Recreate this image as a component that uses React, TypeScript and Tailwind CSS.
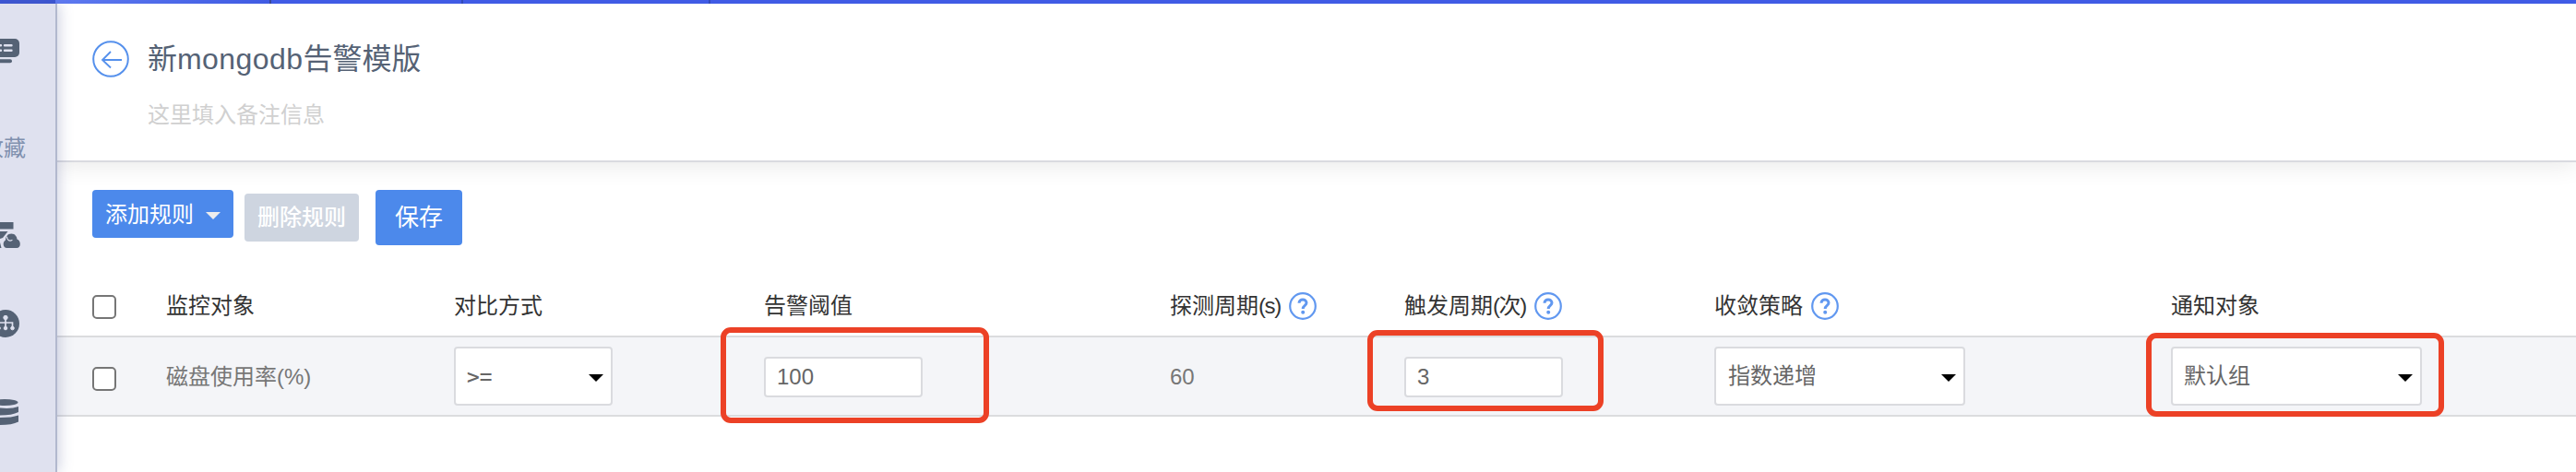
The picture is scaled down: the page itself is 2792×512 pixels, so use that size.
import React from "react";

const arrow = (cls: string) => (
  <svg className={cls} width="16" height="8" viewBox="0 0 16 8" fill="currentColor">
    <path d="M0 0H16L8 8Z" />
  </svg>
);

function Help() {
  return (
    <svg className="mt-[3px] ml-[9px] shrink-0 text-[#6198f0]" width="30" height="30" viewBox="0 0 30 30" fill="none" stroke="currentColor">
      <circle cx="15" cy="15" r="13.8" strokeWidth="2.2" />
      <path d="M11 11.8C11 6.8 19 6.8 19 11.6C19 14.4 15.2 14.4 15.2 18" strokeWidth="3" />
      <circle cx="15.2" cy="21.8" r="2" fill="currentColor" stroke="none" />
    </svg>
  );
}

function Checkbox({ cls }: { cls: string }) {
  return <span className={`block h-[26px] w-[26px] rounded-[5px] border-2 border-[#767676] bg-white ${cls}`} />;
}

function Select({ label, cls }: { label: string; cls: string }) {
  return (
    <div className={`flex h-16 items-center justify-between rounded-[4px] border-2 border-[#dadbdf] bg-white pr-2 ${cls}`}>
      <span>{label}</span>
      {arrow("mt-1 text-black")}
    </div>
  );
}

function Input({ value }: { value: string }) {
  return (
    <div className="mt-0.5 flex h-11 w-[172px] items-center rounded-[4px] border-2 border-[#dadbdf] bg-white pl-3">{value}</div>
  );
}

function Mark({ cls }: { cls: string }) {
  return <div className={`pointer-events-none absolute rounded-[11px] border-6 border-[#ec4126] ${cls}`} />;
}

const columns = "grid grid-cols-[80px_312px_336px_440px_254px_336px_495px_1fr] pl-[38px]";

export default function App() {
  return (
    <div className="relative h-[512px] w-[2792px] overflow-hidden bg-white font-['Liberation_Sans','Noto_Sans_CJK_SC',sans-serif] text-[24px] leading-9">
      <div className="flex h-1">
        <div className="w-[60px] bg-[#3c56d6]" />
        <div className="w-[232px] bg-linear-to-r from-[#617df6] to-[#425eea]" />
        <div className="w-[208px] border-l-2 border-[#3a4a9e] bg-[#425eec]" />
        <div className="w-[268px] border-l-2 border-[#344dc0] bg-[#425eec]" />
        <div className="flex-1 border-l-2 border-[#344dc0] bg-[#425eec]" />
      </div>
      <div className="flex h-[508px]">
        <aside className="relative z-10 flex w-[62px] shrink-0 flex-col border-r-2 border-[#b2b8ce] bg-[#dfe1ef] text-[#556275] shadow-[2px_0_14px_rgba(80,90,150,0.28)]">
          <svg className="mt-[38px] shrink-0" width="24" height="28" viewBox="0 0 24 28" fill="none">
            <rect x="-12" y="0" width="33" height="20" rx="5" fill="currentColor" />
            <path d="M-4 7.2H1M5 7.2H12.5M-4 12.8H1M5 12.8H12.5" stroke="#dfe1ef" strokeWidth="2.4" strokeLinecap="round" />
            <path d="M-8 24.2H11" stroke="currentColor" strokeWidth="4" strokeLinecap="round" />
          </svg>
          <div className="mt-[73px] -ml-[20px] h-12 w-[50px] whitespace-nowrap text-[#8090ae]">收藏</div>
          <svg className="mt-[47px] shrink-0" width="24" height="32" viewBox="0 0 24 32" fill="currentColor">
            <path d="M0 3H14.5V10.5H0ZM0 13H8.5L3 20L0 21Z" />
            <path d="M0 25L1.5 31H0Z" />
            <path d="M7 31C2.5 30 3 24 6 22.5C6 13.500 18 13.500 18.500 21.500C23 23 23 31 18 31Z" />
            <path d="M7.5 19C7.500 22 10 24 13 22.500" fill="none" stroke="#dfe1ef" strokeWidth="1.2" strokeLinecap="round" />
          </svg>
          <svg className="mt-[66px] shrink-0" width="24" height="30" viewBox="0 0 24 30">
            <circle cx="6" cy="15" r="15" fill="currentColor" />
            <g fill="#dfe1ef" stroke="#dfe1ef">
              <path d="M6 8V20M-3 20V14H13.5V20" fill="none" strokeWidth="1.7" />
              <circle cx="6" cy="8.5" r="2.2" />
              <circle cx="6" cy="20" r="1.8" />
              <circle cx="13.5" cy="20" r="1.8" />
              <circle cx="-1.5" cy="20" r="1.8" />
            </g>
          </svg>
          <svg className="mt-[67px] shrink-0" width="24" height="28" viewBox="0 0 24 28" fill="currentColor">
            <ellipse cx="5" cy="3.5" rx="14.500" ry="3.5" />
            <path d="M-9 8Q9 12 20 8V14Q13 17.500 0 17.500H-9ZM-9 20H0Q13 20 20 17.500V24.500Q13 28 0 28H-9Z" />
          </svg>
        </aside>
        <main className="min-w-0 flex-1">
          <header className="relative flex h-[172px] border-b-2 border-[#d9dae0] bg-white pt-10 pl-[38px] shadow-[0_4px_24px_rgba(0,0,0,0.09)]">
            <svg className="text-[#5590ec]" width="40" height="40" viewBox="0 0 40 40" fill="none" stroke="currentColor" strokeWidth="2">
              <circle cx="20" cy="20" r="18.8" />
              <path d="M32 21H11M20 12L11 21L20 29.5" strokeWidth="1.8" />
            </svg>
            <div className="pl-5">
              <h1 className="h-10 text-[32px] leading-10 text-[#556275]">新<span className="tracking-[0.45px]">mongodb</span>告警模版</h1>
              <p className="mt-[23px] text-[#d0d0d0]">这里填入备注信息</p>
            </div>
          </header>
          <div className="flex h-[134px] items-start pt-[30px] pl-[38px] text-white">
            <button className="flex h-[52px] w-[153px] items-center rounded-[4px] bg-[#4c89eb] pl-[14px]">
              <span className="mt-0.5 w-[109px] text-left">添加规则</span>
              {arrow("mt-1 text-[#ededed]")}
            </button>
            <button className="mt-1 ml-3 h-[52px] w-[124px] rounded-[4px] bg-[#ced5e0] pb-px font-medium">删除规则</button>
            <button className="ml-[18px] h-[60px] w-[94px] rounded-[4px] bg-[#4c89eb] text-[26px]">保存</button>
          </div>
          <div className={`${columns} h-[54px] pt-1 text-[#333]`}>
            <Checkbox cls="mt-1.5" />
            <div>监控对象</div>
            <div>对比方式</div>
            <div>告警阈值</div>
            <div className="flex items-start">
              <span>探测周期<span className="tracking-[-1.4px]">(s)</span></span>
              <Help />
            </div>
            <div className="flex items-start">
              <span>触发周期<span className="tracking-[-1.4px]">(次)</span></span>
              <Help />
            </div>
            <div className="flex items-start">收敛策略<Help /></div>
            <div>通知对象</div>
          </div>
          <div className={`${columns} h-[88px] items-center border-y-2 border-[#dbdcde] bg-[#f4f5f8] text-[#777]`}>
            <Checkbox cls="mt-1.5" />
            <div className="mt-0.5">磁盘使用率(%)</div>
            <div className="text-[#666]"><Select label=">=" cls="w-[172px] pl-[12px] font-['Noto_Sans_CJK_SC'] font-medium" /></div>
            <div className="text-[#666]"><Input value="100" /></div>
            <div className="mt-0.5">60</div>
            <div className="text-[#666]"><Input value="3" /></div>
            <div className="text-[#666]"><Select label="指数递增" cls="w-[272px] pl-[13px]" /></div>
            <div className="text-[#666]"><Select label="默认组" cls="w-[272px] pl-[12px]" /></div>
          </div>
        </main>
      </div>
      <Mark cls="top-[355px] left-[781px] h-[104px] w-[291px]" />
      <Mark cls="top-[358px] left-[1482px] h-[88px] w-[256px]" />
      <Mark cls="top-[361px] left-[2326px] h-[91px] w-[323px]" />
    </div>
  );
}
